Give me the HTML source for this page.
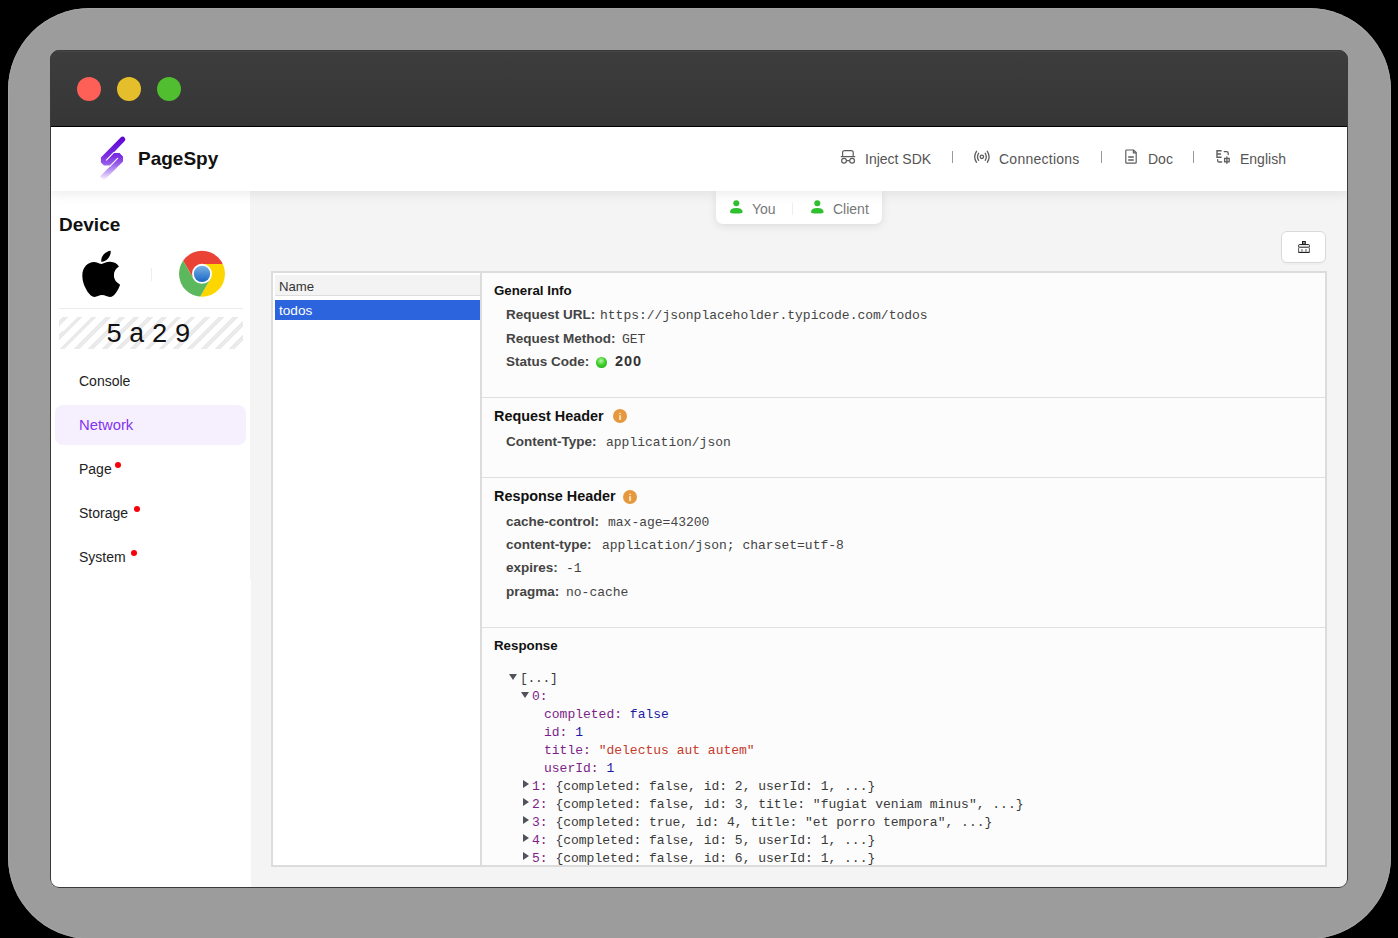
<!DOCTYPE html>
<html><head><meta charset="utf-8">
<style>
*{box-sizing:border-box;margin:0;padding:0}
html,body{width:1398px;height:938px;overflow:hidden;background:#000;font-family:"Liberation Sans",sans-serif}
.a{position:absolute}
#shadow{position:absolute;left:8px;top:8px;width:1383px;height:931px;border-radius:82px;background:#9c9c9c;box-shadow:inset 0 0 0 1px #a4a4a4}
#win{position:absolute;left:50px;top:50px;width:1298px;height:838px;border-radius:9px;overflow:hidden;background:#f4f4f4}
#frame{position:absolute;left:50px;top:50px;width:1298px;height:838px;border-radius:9px;border:1px solid #3a3a3a;z-index:50}
#title{position:absolute;left:0;top:0;width:1298px;height:77px;background:linear-gradient(#3d3d3d,#363636);border-bottom:1px solid #000;box-shadow:inset 0 1px 0 #5c5c5c,inset 0 2px 1px rgba(255,255,255,.05)}
.dot{position:absolute;top:27px;width:24px;height:24px;border-radius:50%}
#header{position:absolute;left:0;top:77px;width:1298px;height:64px;background:#fff;box-shadow:0 2px 12px rgba(0,0,0,.09);z-index:5}
#side{position:absolute;left:0;top:141px;width:200px;height:700px;background:#fff}
#side2{position:absolute;left:200px;top:530px;width:1px;height:310px;background:#fff}
.mono{font-family:"Liberation Mono",monospace}
.t{position:absolute;white-space:nowrap;line-height:1}
.nav{font-size:14px;color:#555}
.vdiv{position:absolute;width:1px;height:12px;background:#9a9a9a}
.menu{font-size:14.3px}
.menu{font-size:14px;color:#222}
.rdot{position:absolute;width:6px;height:6px;border-radius:50%;background:#f5000b}
.lbl{font-size:13.5px;font-weight:bold;color:#444}
.val{font-family:"Liberation Mono",monospace;font-size:13px;color:#444}
.sec{font-size:14px;font-weight:bold;color:#111}
.hr{position:absolute;height:1px;background:#e0e0e0}
.row{position:absolute;left:0;font-family:"Liberation Mono",monospace;font-size:13px;line-height:18px;white-space:nowrap;color:#3a3a3a}
.k{color:#7d1f88}.b{color:#1a1aa6}.s{color:#c53a2c}
.tri{display:inline-block;width:0;height:0;vertical-align:2px}
.tdown{border-left:4.6px solid transparent;border-right:4.6px solid transparent;border-top:6px solid #50545a;margin-right:3px}
.tright{border-top:4px solid transparent;border-bottom:4px solid transparent;border-left:6px solid #50545a;margin-right:3px}
</style></head><body>
<div id="shadow"></div>
<div id="win">
  <div id="title">
    <div class="dot" style="left:27px;background:#fe5f57"></div>
    <div class="dot" style="left:67px;background:#e5bf2b"></div>
    <div class="dot" style="left:107px;background:#50be2e"></div>
  </div>
  <div id="header">
    <!-- logo -->
    <svg class="a" style="left:0;top:0" width="300" height="64" viewBox="50 127 300 64">
      <defs>
        <linearGradient id="lg" gradientUnits="userSpaceOnUse" x1="0" y1="136" x2="0" y2="180">
          <stop offset="0" stop-color="#5c02d4"/>
          <stop offset="0.45" stop-color="#7a2ee0"/>
          <stop offset="0.62" stop-color="#9558e8"/>
          <stop offset="0.85" stop-color="#cdb4f6"/>
          <stop offset="1" stop-color="#fbf8ff"/>
        </linearGradient>
      </defs>
      <path fill="url(#lg)" d="M120.9 137.3 A2.7 2.7 0 0 1 124.7 141.1 L113.2 153.1 L119.5 153.1 L123 156.6 L123 161.4 L104 180.4 L100.05 176.45 L110.9 165.6 L104 165.6 L100.9 162.5 L100.9 157.4 Z"/>
      <path stroke="#fff" stroke-width="1.1" stroke-linecap="round" fill="none" d="M106.4 160.1 L113.6 152.6"/>
      <path stroke="#fff" stroke-width="1.1" stroke-linecap="round" fill="none" d="M117.6 158.3 L109.8 166.3"/>
    </svg>
    <div class="t" style="left:88px;top:22px;font-size:19px;font-weight:bold;color:#111">PageSpy</div>
    <!-- nav -->
    <svg class="a" style="left:786px;top:17px" width="24" height="24" viewBox="0 0 24 24" fill="none" stroke="#5e5e5e" stroke-width="1.2">
      <path d="M6.6 12.4 V8.6 Q6.6 6.6 8.6 6.6 H15.2 Q17.2 6.6 17.2 8.6 V12.4"/>
      <path d="M4.8 12.6 H19.2" stroke-width="1.4"/>
      <circle cx="8" cy="16.7" r="2.4"/><circle cx="16.1" cy="16.7" r="2.4"/>
      <path d="M10.4 16.6 H13.7"/>
    </svg>
    <div class="t nav" style="left:815px;top:25px">Inject SDK</div>
    <div class="vdiv" style="left:902px;top:24px"></div>
    <svg class="a" style="left:919px;top:17px" width="24" height="24" viewBox="0 0 24 24" fill="none" stroke="#5e5e5e" stroke-width="1.3" stroke-linecap="round">
      <circle cx="12.9" cy="12.8" r="1.7"/>
      <path d="M9.6 9.3 Q7.4 12.8 9.6 16.3"/><path d="M16.2 9.3 Q18.4 12.8 16.2 16.3"/>
      <path d="M7.5 7.3 Q3.9 12.8 7.5 18.3"/><path d="M18.3 7.3 Q21.9 12.8 18.3 18.3"/>
    </svg>
    <div class="t nav" style="left:949px;top:25px;letter-spacing:0.25px">Connections</div>
    <div class="vdiv" style="left:1051px;top:24px"></div>
    <svg class="a" style="left:1069px;top:17px" width="24" height="24" viewBox="0 0 24 24" fill="none" stroke="#5e5e5e" stroke-width="1.2">
      <path d="M14.6 6 H7.6 Q6.8 6 6.8 6.8 V18.4 Q6.8 19.2 7.6 19.2 H16.4 Q17.2 19.2 17.2 18.4 V8.6 Z"/>
      <path d="M14.4 6 V8.8 H17.2"/>
      <path d="M9.2 13 H14.8 M9.2 16 H14.8" stroke-width="1.4"/>
    </svg>
    <div class="t nav" style="left:1098px;top:25px">Doc</div>
    <div class="vdiv" style="left:1143px;top:24px"></div>
    <svg class="a" style="left:1160px;top:17px" width="24" height="24" viewBox="0 0 24 24" fill="none" stroke="#5e5e5e" stroke-width="1.3">
      <path d="M11.6 6.8 H7 V13.2 H11.6 M7 10 H11" stroke-width="1.4"/>
      <path d="M14.2 7.6 H16.6 Q18.2 7.6 18.2 9.2 V10.6" stroke-linecap="round"/>
      <path d="M7.6 15.6 V16.4 Q7.6 18 9.2 18 H11.6" stroke-linecap="round"/>
      <rect x="14.6" y="14.4" width="4.6" height="3.4"/>
      <path d="M16.9 12.4 V19.8" stroke-width="1.4"/>
    </svg>
    <div class="t nav" style="left:1190px;top:25px">English</div>
  </div>
  <div id="side2"></div>
  <div id="side">
    <div class="t" style="left:9px;top:24px;font-size:19px;font-weight:bold;color:#111">Device</div>
    <svg class="a" style="left:0;top:0" width="201" height="220" viewBox="50 191 201 220">
      <g transform="translate(81.9 247.4) scale(0.1005 0.1033)">
        <path fill="#000" d="M318.7 268.7c-.2-36.7 16.4-64.4 50-84.8-18.8-26.9-47.2-41.7-84.7-44.6-35.5-2.8-74.3 20.7-88.5 20.7-15 0-49.4-19.7-76.4-19.7C63.3 141.2 4 184.8 4 273.5q0 39.3 14.4 81.2c12.8 36.7 59 126.7 107.2 125.2 25.2-.6 43-17.9 75.8-17.9 31.8 0 48.3 17.9 76.4 17.9 48.6-.7 90.4-82.5 102.6-119.3-65.2-30.7-61.7-90-61.7-91.9zm-56.6-164.2c27.3-32.4 24.8-61.9 24-72.5-24.1 1.4-52 16.4-67.9 34.9-17.5 19.8-27.8 44.3-25.6 71.9 26.1 2 49.9-11.4 69.5-34.3z"/>
      </g>
      <rect x="151" y="268" width="1" height="13" fill="#eee"/>
      <defs>
        <clipPath id="cc"><circle cx="202" cy="273.85" r="23"/></clipPath>
        <linearGradient id="bl" x1="0" y1="0" x2="0" y2="1"><stop offset="0" stop-color="#7cb2e6"/><stop offset="1" stop-color="#1867c4"/></linearGradient>
      </defs>
      <g clip-path="url(#cc)">
        <polygon fill="#ea4335" points="202.00,264.05 262.00,264.05 262.00,213.85 142.00,213.85 163.51,226.79 193.51,278.75 202.00,273.85"/>
        <polygon fill="#fdd600" points="210.49,278.75 180.49,330.71 262.00,333.85 262.00,264.05 202.00,264.05 202.00,273.85"/>
        <polygon fill="#5cb85c" points="193.51,278.75 163.51,226.79 142.00,213.85 142.00,333.85 180.49,330.71 210.49,278.75 202.00,273.85"/>
      </g>
      <circle cx="202" cy="273.85" r="10" fill="#fff"/>
      <circle cx="202" cy="273.85" r="8.2" fill="url(#bl)"/>
      <rect x="59" y="308" width="184" height="1" fill="#ececec"/>
    </svg>
    <div class="a" style="left:9px;top:126px;width:184px;height:32px;background:repeating-linear-gradient(135deg,#eaeaea 0 4px,#fff 4px 10px);background-position:4px 0"></div>
    <div class="t mono" style="left:56px;top:131px;font-size:27px;letter-spacing:6.6px;color:#111">5a29</div>
    <div class="a" style="left:5px;top:214px;width:191px;height:40px;border-radius:8px;background:#f6f0fe"></div>
    <div class="t menu" style="left:29px;top:183px">Console</div>
    <div class="t menu" style="left:29px;top:227px;color:#8433ee;font-size:14.8px">Network</div>
    <div class="t menu" style="left:29px;top:271px">Page</div>
    <div class="rdot" style="left:65px;top:271px"></div>
    <div class="t menu" style="left:29px;top:315px">Storage</div>
    <div class="rdot" style="left:84px;top:315px"></div>
    <div class="t menu" style="left:29px;top:359px">System</div>
    <div class="rdot" style="left:81px;top:359px"></div>
  </div>
  <!-- tabs -->
  <div class="a" style="left:666px;top:141px;width:166px;height:33px;background:#fff;border-radius:0 0 7px 7px;box-shadow:0 2px 8px rgba(0,0,0,.10);z-index:4">
    <svg class="a" style="left:14px;top:9px" width="13" height="14" viewBox="0 0 13 14"><circle cx="6.3" cy="3.2" r="3" fill="#2fbf2f"/><path d="M0 12.2 Q0 8 6.3 8 Q12.6 8 12.6 12.2 Q12.6 13.6 6.3 13.6 Q0 13.6 0 12.2Z" fill="#2fbf2f"/></svg>
    <div class="t" style="left:36px;top:11px;font-size:14px;color:#777">You</div>
    <div class="a" style="left:76px;top:12px;width:1px;height:12px;background:#eee"></div>
    <svg class="a" style="left:95px;top:9px" width="13" height="14" viewBox="0 0 13 14"><circle cx="6.3" cy="3.2" r="3" fill="#2fbf2f"/><path d="M0 12.2 Q0 8 6.3 8 Q12.6 8 12.6 12.2 Q12.6 13.6 6.3 13.6 Q0 13.6 0 12.2Z" fill="#2fbf2f"/></svg>
    <div class="t" style="left:117px;top:11px;font-size:14px;color:#777">Client</div>
  </div>
  <!-- clear button -->
  <div class="a" style="left:1231px;top:181px;width:45px;height:32px;background:#fff;border:1px solid #d9d9d9;border-radius:6px;box-shadow:0 2px 0 rgba(0,0,0,.02)">
    <svg class="a" style="left:16px;top:9px" width="12" height="13" viewBox="0 0 12 13" fill="none" stroke="#1a1a1a" stroke-width="1">
      <rect x="4.5" y="0.5" width="2.8" height="2.7" fill="#9a9a9a"/>
      <rect x="0.6" y="3.6" width="10.8" height="2.6" rx="0.8"/>
      <path d="M0.7 6.4 L0.6 11.4 H11.4 L11.3 6.4" stroke="#555"/>
      <path d="M0.6 11.4 H11.4"/>
      <rect x="3.1" y="8.1" width="1.7" height="2.8" fill="#9a9a9a" stroke="none"/>
      <rect x="7.1" y="8.1" width="1.7" height="2.8" fill="#9a9a9a" stroke="none"/>
    </svg>
  </div>
  <!-- panel -->
  <div class="a" style="left:221px;top:221px;width:1056px;height:596px;border:2px solid #dcdcdc;background:#fff">
    <!-- list -->
    <div class="a" style="left:2px;top:2px;width:205px;height:21px;background:#f3f3f3;border-bottom:1px solid #ddd"></div>
    <div class="t" style="left:6px;top:7px;font-size:13.2px;color:#333">Name</div>
    <div class="a" style="left:2px;top:27px;width:205px;height:20px;background:#2b64dd"></div>
    <div class="t" style="left:6px;top:31px;font-size:13.6px;color:#fff">todos</div>
    <div class="a" style="left:207px;top:0;width:2px;height:592px;background:#dcdcdc"></div>
    <!-- detail -->
    <div class="a" style="left:209px;top:0;width:843px;height:592px;background:#fcfcfc;overflow:hidden">
      <div class="t sec" style="left:12px;top:11px;font-size:13.3px">General Info</div>
      <div class="t lbl" style="left:24px;top:35px">Request URL:</div>
      <div class="t val" style="left:118px;top:36px">https://jsonplaceholder.typicode.com/todos</div>
      <div class="t lbl" style="left:24px;top:59px">Request Method:</div>
      <div class="t val" style="left:140px;top:60px">GET</div>
      <div class="t lbl" style="left:24px;top:82px">Status Code:</div>
      <div class="a" style="left:114px;top:84px;width:10.5px;height:10.5px;border-radius:50%;background:radial-gradient(circle at 45% 35%,#b8f5a8 0,#3fcf2a 45%,#1ea312 100%)"></div>
      <div class="t" style="left:133px;top:81px;font-size:14.5px;letter-spacing:0.9px;font-weight:bold;color:#333">200</div>
      <div class="hr" style="left:0;top:124px;width:843px"></div>

      <div class="t sec" style="left:12px;top:136px;font-size:14.4px">Request Header</div>
      <svg class="a" style="left:131px;top:136px" width="14" height="14" viewBox="0 0 14 14"><circle cx="7" cy="7" r="7" fill="#e6983f"/><rect x="6" y="3.9" width="2.1" height="1.1" fill="#f8dcb6"/><rect x="6" y="6.2" width="2.1" height="4.8" fill="#f8dcb6"/></svg>
      <div class="t lbl" style="left:24px;top:162px">Content-Type:</div>
      <div class="t val" style="left:124px;top:163px">application/json</div>
      <div class="hr" style="left:0;top:204px;width:843px"></div>

      <div class="t sec" style="left:12px;top:216px;font-size:14.4px">Response Header</div>
      <svg class="a" style="left:140.6px;top:216.5px" width="14" height="14" viewBox="0 0 14 14"><circle cx="7" cy="7" r="7" fill="#e6983f"/><rect x="6" y="3.9" width="2.1" height="1.1" fill="#f8dcb6"/><rect x="6" y="6.2" width="2.1" height="4.8" fill="#f8dcb6"/></svg>
      <div class="t lbl" style="left:24px;top:242px">cache-control:</div>
      <div class="t val" style="left:126px;top:243px">max-age=43200</div>
      <div class="t lbl" style="left:24px;top:265px">content-type:</div>
      <div class="t val" style="left:120px;top:266px">application/json; charset=utf-8</div>
      <div class="t lbl" style="left:24px;top:288px">expires:</div>
      <div class="t val" style="left:84px;top:289px">-1</div>
      <div class="t lbl" style="left:24px;top:312px">pragma:</div>
      <div class="t val" style="left:84px;top:313px">no-cache</div>
      <div class="hr" style="left:0;top:354px;width:843px"></div>

      <div class="t sec" style="left:12px;top:366px;font-size:13.3px">Response</div>
      <div class="a" style="left:1px;top:397px;width:843px">
        <div class="row" style="top:0;left:26px;letter-spacing:-0.3px"><span class="tri tdown"></span>[...]</div>
        <div class="row" style="top:18px;left:38px"><span class="tri tdown"></span><span class="k">0:</span></div>
        <div class="row" style="top:36px;left:61px"><span class="k">completed:</span> <span class="b">false</span></div>
        <div class="row" style="top:54px;left:61px"><span class="k">id:</span> <span class="b">1</span></div>
        <div class="row" style="top:72px;left:61px"><span class="k">title:</span> <span class="s">"delectus aut autem"</span></div>
        <div class="row" style="top:90px;left:61px"><span class="k">userId:</span> <span class="b">1</span></div>
        <div class="row" style="top:108px;left:40px"><span class="tri tright"></span><span class="k">1:</span> {completed: false, id: 2, userId: 1, ...}</div>
        <div class="row" style="top:126px;left:40px"><span class="tri tright"></span><span class="k">2:</span> {completed: false, id: 3, title: "fugiat veniam minus", ...}</div>
        <div class="row" style="top:144px;left:40px"><span class="tri tright"></span><span class="k">3:</span> {completed: true, id: 4, title: "et porro tempora", ...}</div>
        <div class="row" style="top:162px;left:40px"><span class="tri tright"></span><span class="k">4:</span> {completed: false, id: 5, userId: 1, ...}</div>
        <div class="row" style="top:180px;left:40px"><span class="tri tright"></span><span class="k">5:</span> {completed: false, id: 6, userId: 1, ...}</div>
      </div>
    </div>
  </div>
</div>
<div id="frame"></div>
</body></html>
